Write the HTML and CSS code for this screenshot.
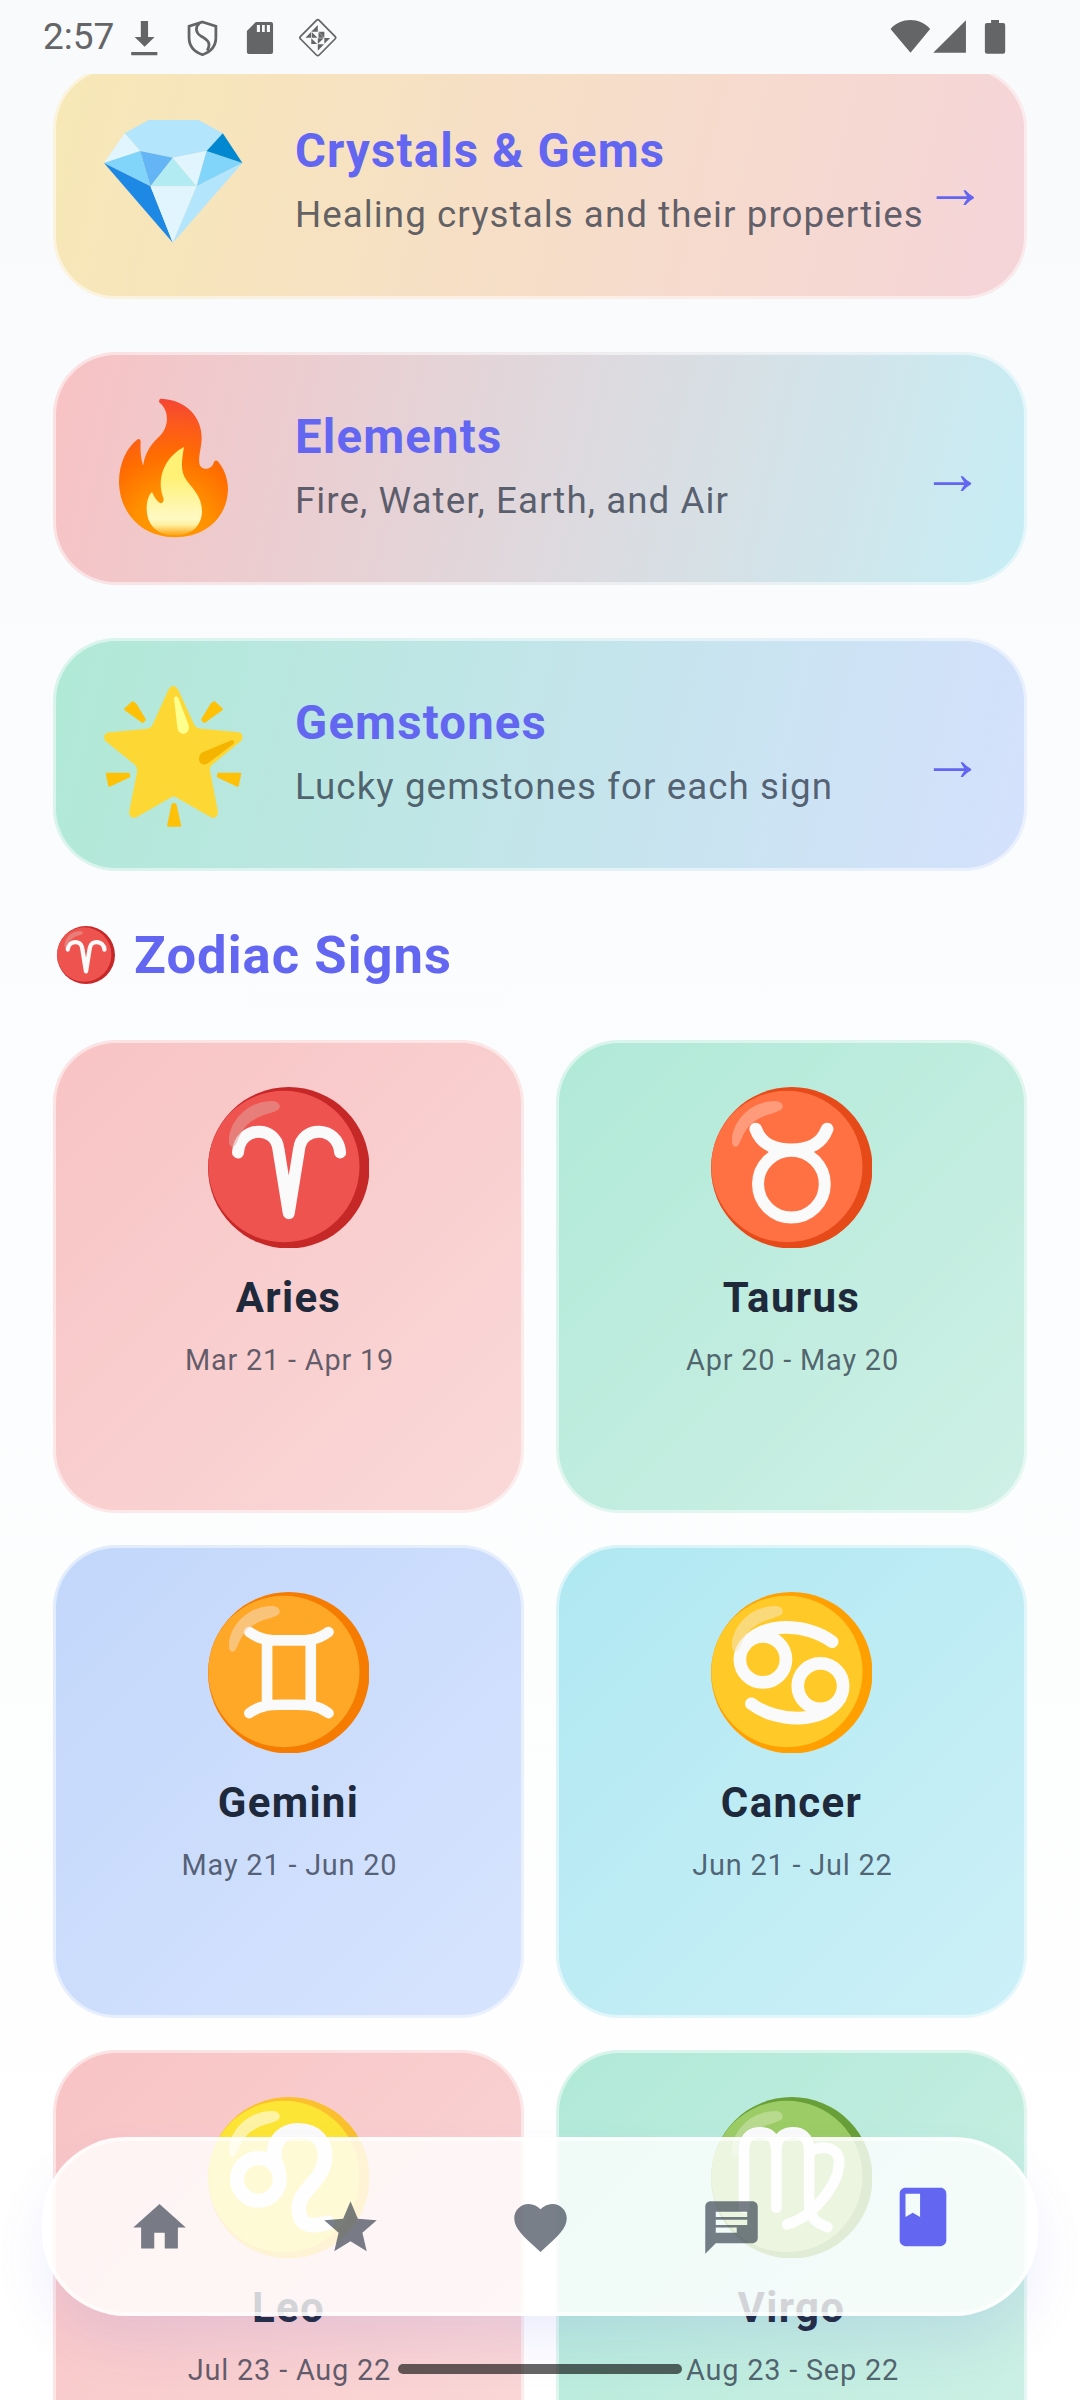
FILE: index.html
```html
<!DOCTYPE html>
<html lang="en">
<head>
<meta charset="utf-8">
<title>Zodiac Library</title>
<link rel="stylesheet" href="styles.css">
</head>
<body>
<svg class="defs" width="0" height="0">
  <defs>
    <path id="shine" d="M566 352C562 300 612 228 697 228C716 229 725 246 712 255C690 268 655 268 622 298C596 325 594 350 584 361C575 370 567 362 566 352Z"/>
    <g id="aries">
      <circle cx="745" cy="428" r="242" fill="#c62828"/><ellipse cx="730.500" cy="424" rx="226.500" ry="227" fill="#ef5350"/>
      <path class="glyph w36" d="M593 382C598 302 706 300 714 372L745 564L776 372C784 300 892 302 899 382"/>
      <use href="#shine" fill="#e1a29a" fill-opacity=".55"/>
    </g>
  </defs>
</svg>
<div class="screen">
  <header class="status">
    <span class="clock">2:57</span>
    <svg class="status-left" viewBox="363 0 639 222" preserveAspectRatio="none">
      <path d="M409 63h21v48h19l-29 29l-29-29h18zM381 156h76v10h-76z"/>
      <path class="line" stroke-width="8" d="M588 66L627 79V112C627 138 612 156 588 164C564 156 549 138 549 112V79Z"/>
      <path class="line" stroke-width="8" d="M579 70C566 82 568 98 583 108C606 121 613 130 602 152"/>
      <path fill-rule="evenodd" d="M743 66H787Q793 66 793 72V156Q793 162 787 162H723Q717 162 717 156V93ZM746 75V96H755V75ZM761 75V96H769V75ZM775 75V96H784V75Z"/>
      <path class="line" stroke-width="5" d="M919 61Q923 57 927 61L973 109Q977 113 973 117L927 165Q923 169 919 165L873 117Q869 113 873 109Z"/>
      <path d="M923 75V95H904ZM925 95H942V113ZM904 95V113H887ZM906 97L922 113H906ZM925 97V113H941ZM942 114H959L942 131ZM904 115L921 132H904ZM923 115H940L923 132ZM923 133H941L923 152Z"/>
    </svg>
    <svg class="status-right" viewBox="987.400 0 406.600 222" preserveAspectRatio="none">
      <path d="M1018 87C1048 52 1103 51 1133 87L1076 158ZM1237 61V158H1142ZM1310 60H1333V69H1345Q1351 69 1351 75V155Q1351 161 1345 161H1298Q1292 161 1292 155V75Q1292 69 1298 69H1310Z"/>
    </svg>
  </header>

  <main class="content">
    <section class="topics">
      <article class="topic crystals">
        <svg class="emoji" viewBox="290.400 327 429.800 444" preserveAspectRatio="none">
          <path fill="#b3e5fc" d="M432 360H576L647 400L600 453L502 473L407 453L362 400Z"/>
          <path fill="#e1f5fe" d="M362 400L407 453L302 489Z"/>
          <path fill="#81d4fa" d="M302 489L407 453L437 559Z"/>
          <path fill="#64b5f6" d="M407 453L502 473L437 559Z"/>
          <path fill="#b2ebf2" d="M502 473L571 559H437Z"/>
          <path fill="#e1f5fe" d="M502 473L600 453L571 559Z"/>
          <path fill="#81d4fa" d="M600 453L704 489L571 559Z"/>
          <path fill="#0288d1" d="M647 400L704 489L600 453Z"/>
          <path fill="#1e88e5" d="M302 489L437 559L502 728Z"/>
          <path fill="#e1f5fe" d="M437 559H571L502 728Z"/>
          <path fill="#b3e5fc" d="M571 559L704 489L502 728Z"/>
        </svg>
        <div class="topic-text"><h3>Crystals &amp; Gems</h3><p>Healing crystals and their properties</p></div>
        <span class="arrow">→</span>
      </article>
      <article class="topic elements">
        <svg class="emoji" viewBox="180 156.500 444 422" preserveAspectRatio="none">
          <defs>
            <radialGradient id="flame" gradientUnits="userSpaceOnUse" cx="395" cy="555" r="395">
              <stop offset="0" stop-color="#ff9800"/><stop offset=".3" stop-color="#ff9100"/><stop offset=".58" stop-color="#ff6d00"/><stop offset=".8" stop-color="#fc5a1c"/><stop offset="1" stop-color="#f44336"/>
            </radialGradient>
            <linearGradient id="core" gradientUnits="userSpaceOnUse" x1="0" y1="305" x2="0" y2="560">
              <stop offset="0" stop-color="#fff176"/><stop offset=".35" stop-color="#fff176"/><stop offset=".8" stop-color="#fff9c4"/><stop offset=".87" stop-color="#fff0a0"/><stop offset="1" stop-color="#ff9800"/>
            </linearGradient>
          </defs>
          <path fill="url(#flame)" d="M357 174Q358 166 364 167C440 170 486 222 485 280C484 310 475 330 478 352C482 372 515 374 522 347Q528 340 534 346C552 366 564 395 564 425C562 505 498 562 405 562C305 562 238 492 237 404C237 350 262 305 293 283Q302 280 302 290C300 320 304 345 310 357C315 320 335 295 360 273C388 245 388 200 358 178Z"/>
          <path fill="url(#core)" d="M432 305C425 345 420 375 440 400C465 430 486 450 486 490C484 530 455 557 403 557C350 557 320 525 320 480C320 460 326 440 336 433C342 445 350 460 362 465C370 465 373 455 369 447C350 400 370 335 432 305Z"/>
        </svg>
        <div class="topic-text"><h3>Elements</h3><p>Fire, Water, Earth, and Air</p></div>
        <span class="arrow">→</span>
      </article>
      <article class="topic gemstones">
        <svg class="emoji" viewBox="180 971.800 444 422" preserveAspectRatio="none">
          <path fill="#ffc107" stroke="#ffc107" stroke-width="7" stroke-linejoin="round" d="M256 1052L278 1033L286 1038L314 1082L308 1088ZM545 1052L523 1033L515 1038L487 1082L493 1088ZM201 1237H266L267 1244L208 1270ZM600 1237H535L534 1244L593 1270ZM398 1324H406L420 1384H385Z"/>
          <path fill="#fdd835" d="M386 995Q400 975 414 995L462 1095Q467 1105 478 1107L598 1118Q614 1126 604 1142L517 1210Q508 1217 510 1228L534 1345Q532 1366 514 1361L408 1303Q401 1299 394 1303L288 1361Q270 1366 267 1347L292 1227Q292 1217 284 1210L195 1142Q187 1126 203 1119L322 1108Q333 1106 338 1096Z"/>
          <path fill="#ffff8d" d="M402 1020Q408 1010 415 1020L446 1098Q450 1118 431 1123Q413 1121 412 1104Z"/>
          <path fill="#f4b400" d="M576 1140Q584 1140 582 1150L502 1208Q485 1215 478 1200Q474 1184 488 1175Z"/>
        </svg>
        <div class="topic-text"><h3>Gemstones</h3><p>Lucky gemstones for each sign</p></div>
        <span class="arrow">→</span>
      </article>
    </section>

    <h2 class="heading"><svg class="heading-icon" viewBox="503 186 484 484"><use href="#aries"/></svg><span>Zodiac Signs</span></h2>

    <section class="signs">
      <article class="sign rose">
        <svg viewBox="503 186 484 484"><use href="#aries"/></svg>
        <h3>Aries</h3><p>Mar 21 - Apr 19</p>
      </article>
      <article class="sign mint">
        <svg viewBox="503 186 484 484">
          <circle cx="745" cy="428" r="242" fill="#e64a19"/><ellipse cx="730.500" cy="424" rx="226.500" ry="227" fill="#ff7043"/>
          <use href="#shine" fill="#fff" fill-opacity=".3"/>
          <circle class="glyph w36" cx="744" cy="477" r="100"/>
          <path class="glyph w38" d="M637 312C655 360 695 374 744 374S833 360 851 312"/>
        </svg>
        <h3>Taurus</h3><p>Apr 20 - May 20</p>
      </article>
      <article class="sign blue">
        <svg viewBox="503 186 484 484">
          <circle cx="745" cy="428" r="242" fill="#f57c00"/><ellipse cx="730.500" cy="424" rx="226.500" ry="227" fill="#ffa726"/>
          <path class="glyph w32" d="M627 306C665 335 700 331 745 331S826 335 864 306M627 549C665 520 700 524 745 524S826 520 864 549M680 333V522M811 333V522"/>
          <use href="#shine" fill="#f4dcc0" fill-opacity=".55"/>
        </svg>
        <h3>Gemini</h3><p>May 21 - Jun 20</p>
      </article>
      <article class="sign cyan">
        <svg viewBox="503 186 484 484">
          <circle cx="745" cy="428" r="242" fill="#ffa000"/><ellipse cx="730.500" cy="424" rx="226.500" ry="227" fill="#ffca28"/>
          <path class="glyph w38" d="M600 352C650 272 790 278 866 335M890 504C840 584 700 578 624 521"/>
          <circle class="glyph w38" cx="658.600" cy="388" r="69"/><circle class="glyph w38" cx="831" cy="468" r="68"/>
          <use href="#shine" fill="#f5e6c0" fill-opacity=".55"/>
        </svg>
        <h3>Cancer</h3><p>Jun 21 - Jul 22</p>
      </article>
      <article class="sign rose">
        <svg viewBox="503 186 484 484">
          <circle cx="745" cy="428" r="242" fill="#fbc02d"/><ellipse cx="730.500" cy="424" rx="226.500" ry="227" fill="#fde535"/>
          <use href="#shine" fill="#fff" fill-opacity=".55"/>
          <circle class="glyph w42" cx="654" cy="433" r="64"/>
          <path class="glyph w44" d="M714 402C682 340 714 286 774 286C830 286 855 325 854 365C853 435 775 465 775 518C775 578 815 575 862 563"/>
        </svg>
        <h3>Leo</h3><p>Jul 23 - Aug 22</p>
      </article>
      <article class="sign mint">
        <svg viewBox="503 186 484 484">
          <circle cx="745" cy="428" r="242" fill="#689f38"/><ellipse cx="730.500" cy="424" rx="226.500" ry="227" fill="#9ccc65"/>
          <path class="glyph w32" d="M602 518V345C602 297 633 292 651 292S699 300 699 345V518M699 345C699 300 730 292 749 292S797 300 797 345V500C797 550 820 565 852 576M800 350C840 325 890 340 887 385C884 450 810 545 731 568"/>
          <use href="#shine" fill="#fff" fill-opacity=".28"/>
        </svg>
        <h3>Virgo</h3><p>Aug 23 - Sep 22</p>
      </article>
    </section>
  </main>

  <nav class="tabs">
    <a class="tab"><svg viewBox="0 0 24 24"><path d="M10 20v-6h4v6h5v-8h3L12 3 2 12h3v8z"/></svg></a>
    <a class="tab"><svg viewBox="0 0 24 24"><path d="M12 17.270L18.180 21l-1.640-7.030L22 9.240l-7.190-.61L12 2 9.190 8.630 2 9.240l5.460 4.730L5.820 21z"/></svg></a>
    <a class="tab"><svg viewBox="0 0 24 24"><path d="M12 21.350l-1.450-1.320C5.400 15.360 2 12.280 2 8.500 2 5.420 4.420 3 7.500 3c1.740 0 3.410.81 4.500 2.090C13.090 3.810 14.760 3 16.500 3 19.580 3 22 5.420 22 8.500c0 3.780-3.400 6.860-8.550 11.540L12 21.350z"/></svg></a>
    <a class="tab"><svg viewBox="0 0 24 24"><path d="M20 2H4c-1.100 0-1.990.9-1.990 2L2 22l4-4h14c1.100 0 2-.9 2-2V4c0-1.100-.9-2-2-2zM6 9h12v2H6V9zm8 5H6v-2h8v2zm4-6H6V6h12v2z"/></svg></a>
    <a class="tab active"><svg viewBox="0 0 24 24"><path d="M18 2H6c-1.100 0-2 .9-2 2v16c0 1.100.9 2 2 2h12c1.100 0 2-.9 2-2V4c0-1.100-.9-2-2-2zM6 4h5v8l-2.500-1.500L6 12V4z"/></svg></a>
  </nav>
  <div class="gesture"></div>
</div>
</body>
</html>
```
FILE: styles.css
```css
* { box-sizing: border-box; }
html, body { margin: 0; }
body { width: 1080px; height: 2400px; overflow: hidden; font-family: Roboto, sans-serif; }
h2, h3, p { margin: 0; }
.defs { position: absolute; }

.screen {
  position: relative;
  display: flex;
  flex-direction: column;
  width: 1080px;
  height: 2400px;
  overflow: hidden;
  background: linear-gradient(180deg, #f8fafc 0%, #fff 100%);
}

.status { display: flex; flex: none; height: 74px; padding: 0 60px 0 43px; fill: #646567; }
.clock { width: 82px; padding-top: 15px; font-size: 37px; line-height: 44px; color: #646567; }
.status svg { height: 74px; }
.status-left { width: 220px; }
.status-right { width: 140px; margin-left: auto; }
.line { fill: none; stroke: #646567; }

.content { flex: 1; min-height: 0; overflow: hidden; padding: 0 53px; }
.topics { display: grid; grid-template-columns: minmax(0, 1fr); gap: 53px; margin-top: -8px; }
.topic {
  display: flex;
  align-items: center;
  height: 233px;
  padding: 0 40px 0 44px;
  border: 3px solid rgba(255, 255, 255, .5);
  border-radius: 63px;
  background-origin: border-box;
}
.crystals { background-image: linear-gradient(103.400deg, #f7e8b6, #f5d4d9); }
.elements { background-image: linear-gradient(103.400deg, #f8c2c4, #c6eef5); }
.gemstones { background-image: linear-gradient(103.400deg, #b0e9d6, #d5e1fd); }
.emoji { flex: none; width: 148px; height: 148px; margin-right: 47px; }
.topic-text { flex: 1; display: grid; gap: 14.500px; padding-top: 1px; white-space: nowrap; }
.topic h3 { font-size: 47.250px; line-height: 50px; letter-spacing: 1.200px; font-weight: 700; color: #6366f1; }
.topic p { font-size: 36.750px; line-height: 50px; letter-spacing: 1.050px; color: rgba(30, 41, 59, .7); }
.arrow { padding-top: 6px; font: 63px/72px "Liberation Sans", sans-serif; color: #6366f1; }

.heading { display: flex; align-items: center; gap: 19px; height: 169px; padding: 0 0 2px 4px; font-size: 52.500px; font-weight: 700; letter-spacing: 1.050px; color: #6366f1; }
.heading-icon { width: 58px; height: 58px; }

.signs { display: grid; grid-template-columns: 471px 471px; gap: 32px; }
.sign {
  display: flex;
  flex-direction: column;
  align-items: center;
  height: 473px;
  padding-top: 43.500px;
  border: 3px solid rgba(255, 255, 255, .5);
  border-radius: 63px;
  background-origin: border-box;
}
.rose { background-image: linear-gradient(135deg, #f8c3c4, #fad9d9); }
.mint { background-image: linear-gradient(135deg, #b0e9d7, #cff0e6); }
.blue { background-image: linear-gradient(135deg, #c2d7fb, #d7e4fe); }
.cyan { background-image: linear-gradient(135deg, #afe8f2, #cdf0f7); }
.sign svg { width: 161.500px; height: 161.500px; }
.sign h3 { margin-top: 25px; font-size: 42px; line-height: 50px; letter-spacing: 1.310px; font-weight: 700; color: #1e293b; }
.sign p { margin-top: 20px; padding-left: 2px; font-size: 28.900px; line-height: 34px; letter-spacing: .800px; color: rgba(30, 41, 59, .7); }
.glyph { fill: none; stroke: #fafafa; stroke-linecap: round; stroke-linejoin: round; }
.w32 { stroke-width: 32; }
.w36 { stroke-width: 36; }
.w38 { stroke-width: 38; }
.w42 { stroke-width: 42; }
.w44 { stroke-width: 44; }

.tabs {
  position: absolute;
  left: 42px;
  top: 2137px;
  display: flex;
  width: 996px;
  height: 179px;
  padding: 2px 16px 0 18px;
  border: 4px solid rgba(255, 255, 255, .6);
  border-radius: 84px;
  background: rgba(255, 255, 255, .8);
  box-shadow: 0 28px 56px -8px rgba(99, 102, 241, .13);
}
.tab { flex: 1; display: flex; align-items: center; justify-content: center; }
.tab svg { width: 63px; height: 63px; fill: rgba(30, 41, 59, .6); }
.tab.active svg { width: 70px; height: 70px; margin-bottom: 22px; fill: #6366f1; }
.gesture { position: absolute; left: 398px; top: 2364px; width: 284px; height: 10px; border-radius: 5px; background: rgba(0, 0, 0, .6); }
```
